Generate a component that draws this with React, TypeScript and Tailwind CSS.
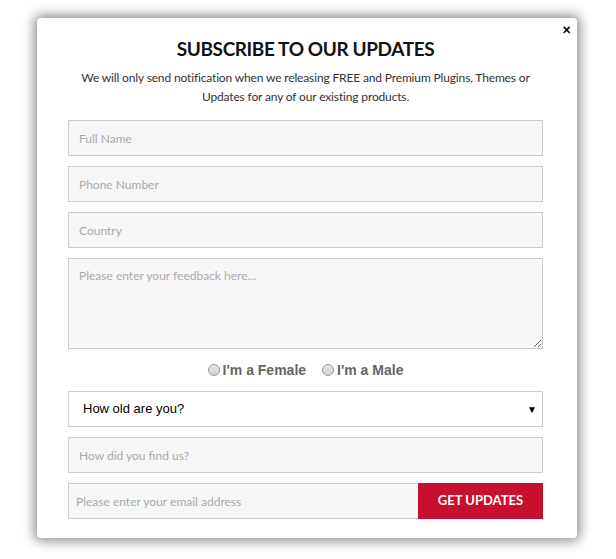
import { useState } from 'react'

const FIELD =
  'block w-full h-9 border border-[#cccccc] bg-[#f7f7f7] px-[10px] text-[12px] text-[#333] placeholder:text-[#aaaaaa] outline-none'

export default function App() {
  const [gender, setGender] = useState('')

  return (
    <div className="min-h-[559px] w-[616px] bg-white pt-[18px] pl-[37px]" style={{ fontFamily: 'Lato, "Open Sans", sans-serif' }}>
      <div className="relative w-[540px] rounded-[4px] bg-white pl-[31px] pr-[34px] pb-[19px] pt-[19px] shadow-[0_0_12px_3px_rgba(0,0,0,0.45)]">
        <button className="absolute right-[6px] top-[4px] text-[15px] font-black leading-none text-black">×</button>

        <h2 className="text-center text-[19px] font-bold leading-[24px] tracking-[-0.4px] text-[#111]">SUBSCRIBE TO OUR UPDATES</h2>
        <p className="mt-[7px] whitespace-nowrap text-center text-[12px] leading-[19px] tracking-[-0.15px] text-[#333]">
          We will only send notification when we releasing FREE and Premium Plugins, Themes or
          <br />
          Updates for any of our existing products.
        </p>

        <form className="mt-[14px] flex flex-col gap-[10px]" onSubmit={(e) => e.preventDefault()}>
          <input className={FIELD} placeholder="Full Name" />
          <input className={FIELD} placeholder="Phone Number" />
          <input className={FIELD} placeholder="Country" />
          <textarea
            className="block h-[91px] w-full border border-[#cccccc] bg-[#f7f7f7] px-[10px] py-[8px] text-[12px] text-[#333] placeholder:text-[#aaaaaa] outline-none"
            placeholder="Please enter your feedback here..."
          />

          <div className="flex h-[22px] items-center justify-center gap-[16px] text-[14px] font-bold text-[#666]" style={{ fontFamily: '"Liberation Sans", Arial, sans-serif' }}>
            {['Female', 'Male'].map((g) => (
              <label key={g} className="flex items-center gap-[3px]">
                <input
                  type="radio"
                  name="gender"
                  checked={gender === g}
                  onChange={() => setGender(g)}
                  className="m-0 h-[12px] w-[12px] appearance-none rounded-full border border-[#9a9a9a] bg-[linear-gradient(#e6e6e6,#d2d2d2)] checked:bg-[radial-gradient(#555_30%,#dcdcdc_40%)]"
                />
                I'm a {g}
              </label>
            ))}
          </div>

          <div className="relative">
            <select
              className="block h-9 w-full appearance-none border border-[#cccccc] bg-white pl-[14px] text-[13px] text-black outline-none"
              style={{ fontFamily: '"Liberation Sans", Arial, sans-serif' }}
              defaultValue=""
            >
              <option value="">How old are you?</option>
              <option>Under 18</option>
              <option>18 - 30</option>
              <option>31 - 50</option>
              <option>Over 50</option>
            </select>
            <span className="pointer-events-none absolute right-[6px] top-1/2 -translate-y-1/2 text-[10px] text-black">▼</span>
          </div>

          <input className={FIELD} placeholder="How did you find us?" />

          <div className="flex h-9">
            <input
              className="h-9 flex-1 border border-r-0 border-[#cccccc] bg-[#f7f7f7] px-[7px] text-[12px] text-[#333] placeholder:text-[#aaaaaa] outline-none"
              placeholder="Please enter your email address"
            />
            <button className="h-9 w-[125px] bg-[#c8102e] text-[13px] font-bold text-white">GET UPDATES</button>
          </div>
        </form>
      </div>
    </div>
  )
}
